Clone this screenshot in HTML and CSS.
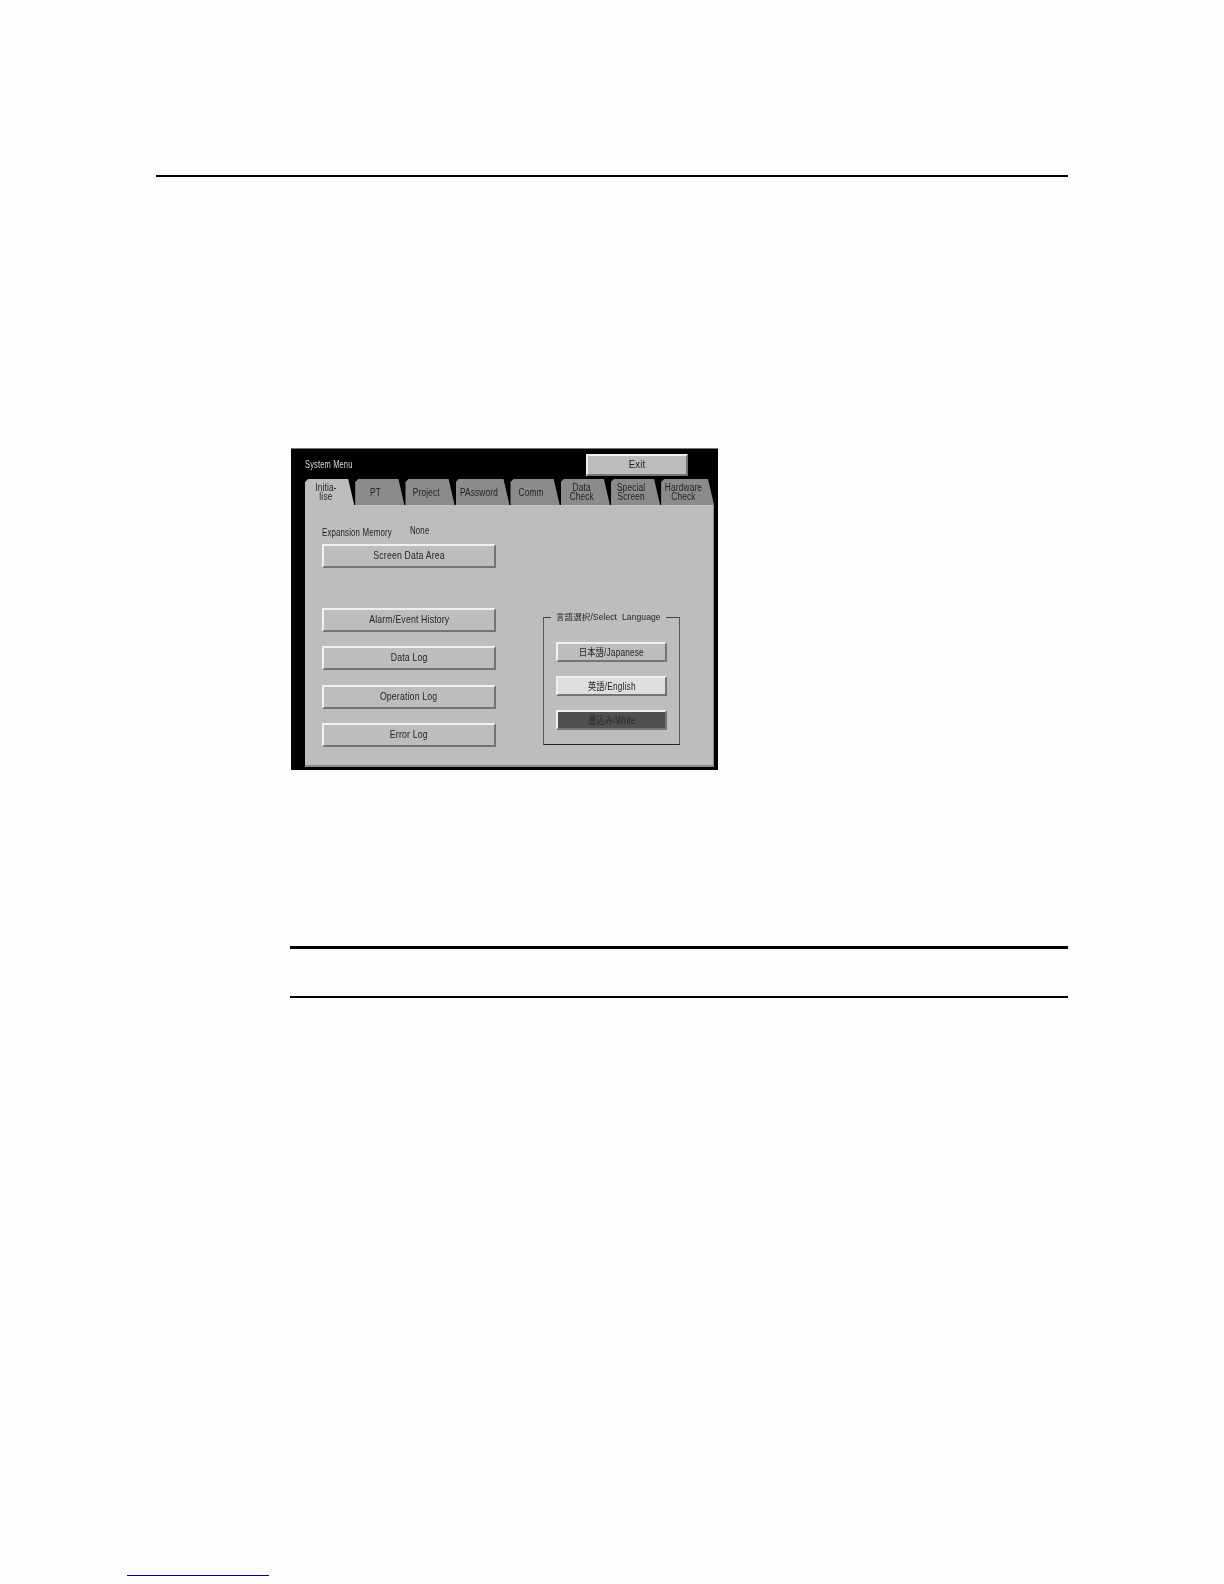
FILE: index.html
```html
<!DOCTYPE html>
<html lang="en">
<head>
    <meta charset="UTF-8">
    <meta name="viewport" content="width=device-width, initial-scale=1.0">
    <title>System Menu</title>
    <link rel="stylesheet" href="styles.css">
</head>
<body>
    <div class="top-rule"></div>

    <div class="screen">
        <div class="title-bar">
            <span class="title lbl-left">System Menu</span>
            <div class="btn exit-btn"><span class="lbl">Exit</span></div>
        </div>

        <div class="tabs">
            <div class="tab active"><span class="lbl">Initia-<br>lise</span></div>
            <div class="tab"><span class="lbl">PT</span></div>
            <div class="tab"><span class="lbl">Project</span></div>
            <div class="tab"><span class="lbl">PAssword</span></div>
            <div class="tab"><span class="lbl">Comm</span></div>
            <div class="tab"><span class="lbl">Data<br>Check</span></div>
            <div class="tab"><span class="lbl">Special<br>Screen</span></div>
            <div class="tab"><span class="lbl">Hardware<br>Check</span></div>
        </div>

        <div class="panel">
            <div class="left-col">
                <div class="memory-row">
                    <span class="memory-label"><span class="lbl-left">Expansion Memory</span></span>
                    <span class="memory-value lbl-left">None</span>
                </div>
                <div class="btn wide-btn"><span class="lbl">Screen Data Area</span></div>
                <div class="log-btns">
                    <div class="btn wide-btn"><span class="lbl">Alarm/Event History</span></div>
                    <div class="btn wide-btn"><span class="lbl">Data Log</span></div>
                    <div class="btn wide-btn"><span class="lbl">Operation Log</span></div>
                    <div class="btn wide-btn"><span class="lbl">Error Log</span></div>
                </div>
            </div>

            <fieldset class="lang-box">
                <legend>言語選択/Select&nbsp; Language</legend>
                <div class="btn lang-btn"><span class="lbl">日本語/Japanese</span></div>
                <div class="btn lang-btn selected"><span class="lbl">英語/English</span></div>
                <div class="btn lang-btn write"><span class="lbl">書込み/Write</span></div>
            </fieldset>
        </div>
    </div>

    <div class="note"></div>

    <div class="footer-link"></div>
</body>
</html>
```

FILE: styles.css
```css
html, body { margin: 0; padding: 0; }
body { width: 1224px; height: 1584px; background: #fefefe; font-family: "Liberation Sans", "Noto Sans CJK JP", sans-serif; overflow: hidden; }

.top-rule { width: 912px; height: 2px; margin: 175px 0 0 156px; background: #000; }

/* terminal screen */
.screen { box-sizing: border-box; width: 427px; height: 322px; margin: 271px 0 0 291px; padding: 5px 4px 3px 14px; background: #000; border-top: 1px solid #777; display: flex; flex-direction: column; font-size: 10.5px; letter-spacing: .2px; color: #222; filter: blur(.4px); }
.title-bar { display: flex; justify-content: space-between; align-items: center; height: 22px; padding-right: 26px; margin-bottom: 3px; }
.title { position: relative; top: -1px; color: #ddd; font-size: 10px; }

/* the panel's bitmap font is much narrower than any installed face */
.lbl { display: inline-block; white-space: nowrap; transform: scaleX(.83); }
.lbl-left { display: inline-block; white-space: nowrap; transform: scaleX(.75); transform-origin: left center; }

.btn { box-sizing: border-box; display: flex; align-items: center; justify-content: center; padding-bottom: 2px; background: #bdbdbd; border: 2px solid; border-color: #f0f0f0 #747474 #747474 #f0f0f0; }
.exit-btn { width: 102px; height: 22px; font-size: 11.5px; }

.tabs { display: flex; gap: 1px; height: 26px; }
.tab { flex: 1; display: flex; align-items: center; justify-content: center; text-align: center; line-height: 9px; padding-right: 8px; font-size: 10px; background: #8b8b8b; clip-path: polygon(0 3px, 3px 0, calc(100% - 6px) 0, 100% 100%, 0 100%); }
.tab.active { background: #bdbdbd; }

.panel { flex: 1; display: flex; justify-content: space-between; align-items: flex-end; padding: 0 33px 18px 17px; background: #bdbdbd; border-bottom: 2px solid #8a8a8a; border-right: 1px solid #8a8a8a; }

.left-col { width: 174px; }
.memory-row { display: flex; height: 24px; box-sizing: border-box; align-items: center; }
.memory-label { width: 88px; }
.memory-value { position: relative; top: -2px; }
.wide-btn { height: 24px; }
.log-btns { display: flex; flex-direction: column; gap: 14.3px; margin-top: 40px; }

/* language group */
.lang-box { box-sizing: border-box; width: 137px; min-width: 0; height: 133px; margin: 0 0 2px; padding: 19px 12px 0; display: flex; flex-direction: column; gap: 14px; border: 1px solid; border-color: #444 #555 #222 #555; }
.lang-box legend { margin: 0 0 0 -5px; padding: 0 5px; font-size: 8.5px; line-height: 11px; letter-spacing: .1px; white-space: nowrap; }
.lang-btn { height: 20px; font-size: 10px; }
.lang-btn.selected { background: #dedede; }
.lang-btn.write { background: #505050; color: #2a2a2a; }

.note { box-sizing: border-box; width: 778px; height: 52px; margin: 176px 0 0 290px; border-top: 3px solid #000; border-bottom: 2px solid #000; }

.footer-link { width: 142px; height: 1px; margin: 577px 0 0 127px; background: #00008b; }
```
